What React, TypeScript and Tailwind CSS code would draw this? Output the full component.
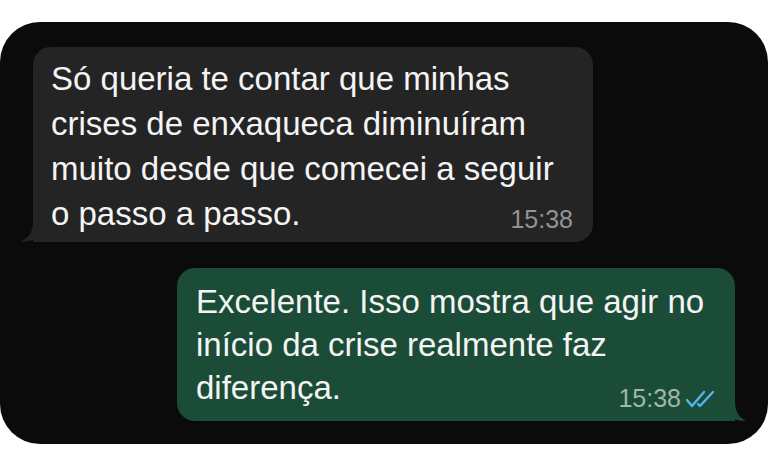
import React from "react";

function TailLeft() {
  return (
    <svg className="absolute bottom-0 left-[-13px]" width="20" height="20" viewBox="0 0 20 20">
      <path d="M13 0 C13 9 9 16 0 20 C6 20 11 19 15 17 L20 20 L20 0 Z" fill="#242424" />
    </svg>
  );
}

function TailRight() {
  return (
    <svg className="absolute bottom-0 right-[-11px]" width="20" height="20" viewBox="0 0 20 20">
      <path d="M9 0 C9 9 12 16 20 20 C14 20 9 19 6 17 L0 20 L0 0 Z" fill="#1b4c38" />
    </svg>
  );
}

function DoubleCheck() {
  return (
    <svg width="32" height="18" viewBox="0 0 32 18" fill="none" stroke="#4fb8ea" strokeWidth="2.4" strokeLinecap="round" strokeLinejoin="round">
      <path d="M2 10 L7 16 L19 2" />
      <path d="M13 14 L15 16 L28 2" />
    </svg>
  );
}

export default function App() {
  return (
    <div className="w-[768px] h-[449px] bg-white pt-[22px] pb-[5px]" style={{ fontFamily: '"Liberation Sans", Arial, sans-serif' }}>
      <div className="h-[422px] w-full rounded-[40px] bg-[#0b0b0b] flex flex-col">
        {/* incoming */}
        <div className="relative mt-[25px] ml-[33px] w-[560px] rounded-[18px] rounded-bl-none bg-[#242424] pt-[9px] pb-[10px] pl-[18px] pr-[20px]">
          <TailLeft />
          <p className="text-[33px] leading-[45px] text-[#f4f4f4]">
            Só queria te contar que minhas<br />
            crises de enxaqueca diminuíram<br />
            muito desde que comecei a seguir<br />
            o passo a passo.
          </p>
          <div className="-mt-[29px] h-[25px] text-right text-[25px] leading-[25px] text-[#939393]">15:38</div>
        </div>

        {/* outgoing */}
        <div className="relative mt-[26px] mr-[33px] self-end w-[558px] rounded-[18px] rounded-br-none bg-[#1b4c38] pt-[12px] pb-[10px] pl-[19px] pr-[18px]">
          <TailRight />
          <p className="text-[33px] leading-[43px] text-[#f4f4f4]">
            Excelente. Isso mostra que agir no<br />
            início da crise realmente faz<br />
            diferença.
          </p>
          <div className="-mt-[23px] h-[25px] flex items-center justify-end gap-[4px] text-[25px] leading-[25px] text-[#9fb8ab]">
            <span>15:38</span>
            <DoubleCheck />
          </div>
        </div>
      </div>
    </div>
  );
}
